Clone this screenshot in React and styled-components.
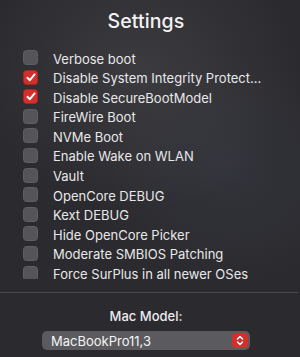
import React from 'react';
import styled, { createGlobalStyle } from 'styled-components';

const GlobalStyle = createGlobalStyle`
  html, body {
    margin: 0;
    padding: 0;
    background: #2a292d;
  }
  body {
    font-family: Inter, "Noto Sans", "Liberation Sans", sans-serif;
    -webkit-font-smoothing: antialiased;
  }
`;

const Panel = styled.div`
  width: 300px;
  height: 357px;
  overflow: hidden;
  display: flex;
  flex-direction: column;
  color: #e8e8ea;
  background:
    radial-gradient(ellipse 160px 140px at 140px 70px, rgba(80, 80, 84, 0.45), rgba(80, 80, 84, 0) 100%),
    radial-gradient(ellipse 140px 120px at 230px 170px, rgba(70, 82, 96, 0.25), rgba(70, 82, 96, 0) 100%),
    #2b2a2e;
`;

const Title = styled.h1`
  margin: 0;
  padding: 9px 8px 0 0;
  height: 41px;
  box-sizing: border-box;
  text-align: center;
  font-size: 19.5px;
  font-weight: 500;
  color: #f2f2f4;
  letter-spacing: 0.1px;
`;

const List = styled.div`
  height: 238px;
  flex: none;
  overflow: hidden;
  padding: 9px 0 0 23px;
  box-sizing: border-box;
  display: flex;
  flex-direction: column;
`;

const Row = styled.label`
  height: 19.6px;
  flex: none;
  display: flex;
  align-items: flex-start;
  gap: 15px;
  font-size: 13px;
  line-height: 15px;
  white-space: nowrap;
`;

const RowText = styled.span`
  padding-top: 1.5px;
`;

const Box = styled.span`
  width: 15px;
  height: 15px;
  flex: none;
  box-sizing: border-box;
  border-radius: 3.5px;
  display: flex;
  align-items: center;
  justify-content: center;
  background: ${p => (p.$checked ? '#d2302c' : '#555458')};
  border: 1px solid ${p => (p.$checked ? '#b0211f' : '#5f5e62')};
`;

const Divider = styled.hr`
  margin: 13px 2px 0 0;
  border: 0;
  height: 1px;
  flex: none;
  background: #4b4a4e;
`;

const Footer = styled.div`
  display: flex;
  flex-direction: column;
  align-items: center;
  padding: 16px 8px 0 0;
`;

const FieldLabel = styled.div`
  font-size: 13px;
  font-weight: 500;
  line-height: 15px;
  color: #ececee;
`;

const Popup = styled.div`
  margin-top: 7px;
  width: 208px;
  height: 19px;
  box-sizing: border-box;
  border-radius: 5px;
  background: #5b5a5e;
  display: flex;
  align-items: center;
  justify-content: space-between;
  padding: 0 2px 0 9px;
  font-size: 13px;
  color: #f4f4f6;
`;

const Stepper = styled.span`
  width: 16px;
  height: 15px;
  border-radius: 4px;
  background: #d2302c;
  display: flex;
  align-items: center;
  justify-content: center;
`;

const options = [
  ['Verbose boot', false],
  ['Disable System Integrity Protect...', true],
  ['Disable SecureBootModel', true],
  ['FireWire Boot', false],
  ['NVMe Boot', false],
  ['Enable Wake on WLAN', false],
  ['Vault', false],
  ['OpenCore DEBUG', false],
  ['Kext DEBUG', false],
  ['Hide OpenCore Picker', false],
  ['Moderate SMBIOS Patching', false],
  ['Force SurPlus in all newer OSes', false],
];

const Check = () => (
  <svg width="10" height="9" viewBox="0 0 10 9">
    <path d="M1.4 4.8 L3.9 7.2 L8.6 1.4" fill="none" stroke="#fff" strokeWidth="1.9" strokeLinecap="round" strokeLinejoin="round" />
  </svg>
);

const Arrows = () => (
  <svg width="8" height="11" viewBox="0 0 8 11">
    <path d="M1.5 4 L4 1.5 L6.5 4 M1.5 7 L4 9.5 L6.5 7" fill="none" stroke="#fff" strokeWidth="1.5" strokeLinecap="round" strokeLinejoin="round" />
  </svg>
);

export default function App() {
  return (
    <>
      <GlobalStyle />
      <Panel>
        <Title>Settings</Title>
        <List>
          {options.map(([text, checked]) => (
            <Row key={text}>
              <Box $checked={checked}>{checked && <Check />}</Box>
              <RowText>{text}</RowText>
            </Row>
          ))}
        </List>
        <Divider />
        <Footer>
          <FieldLabel>Mac Model:</FieldLabel>
          <Popup>
            MacBookPro11,3
            <Stepper>
              <Arrows />
            </Stepper>
          </Popup>
        </Footer>
      </Panel>
    </>
  );
}
